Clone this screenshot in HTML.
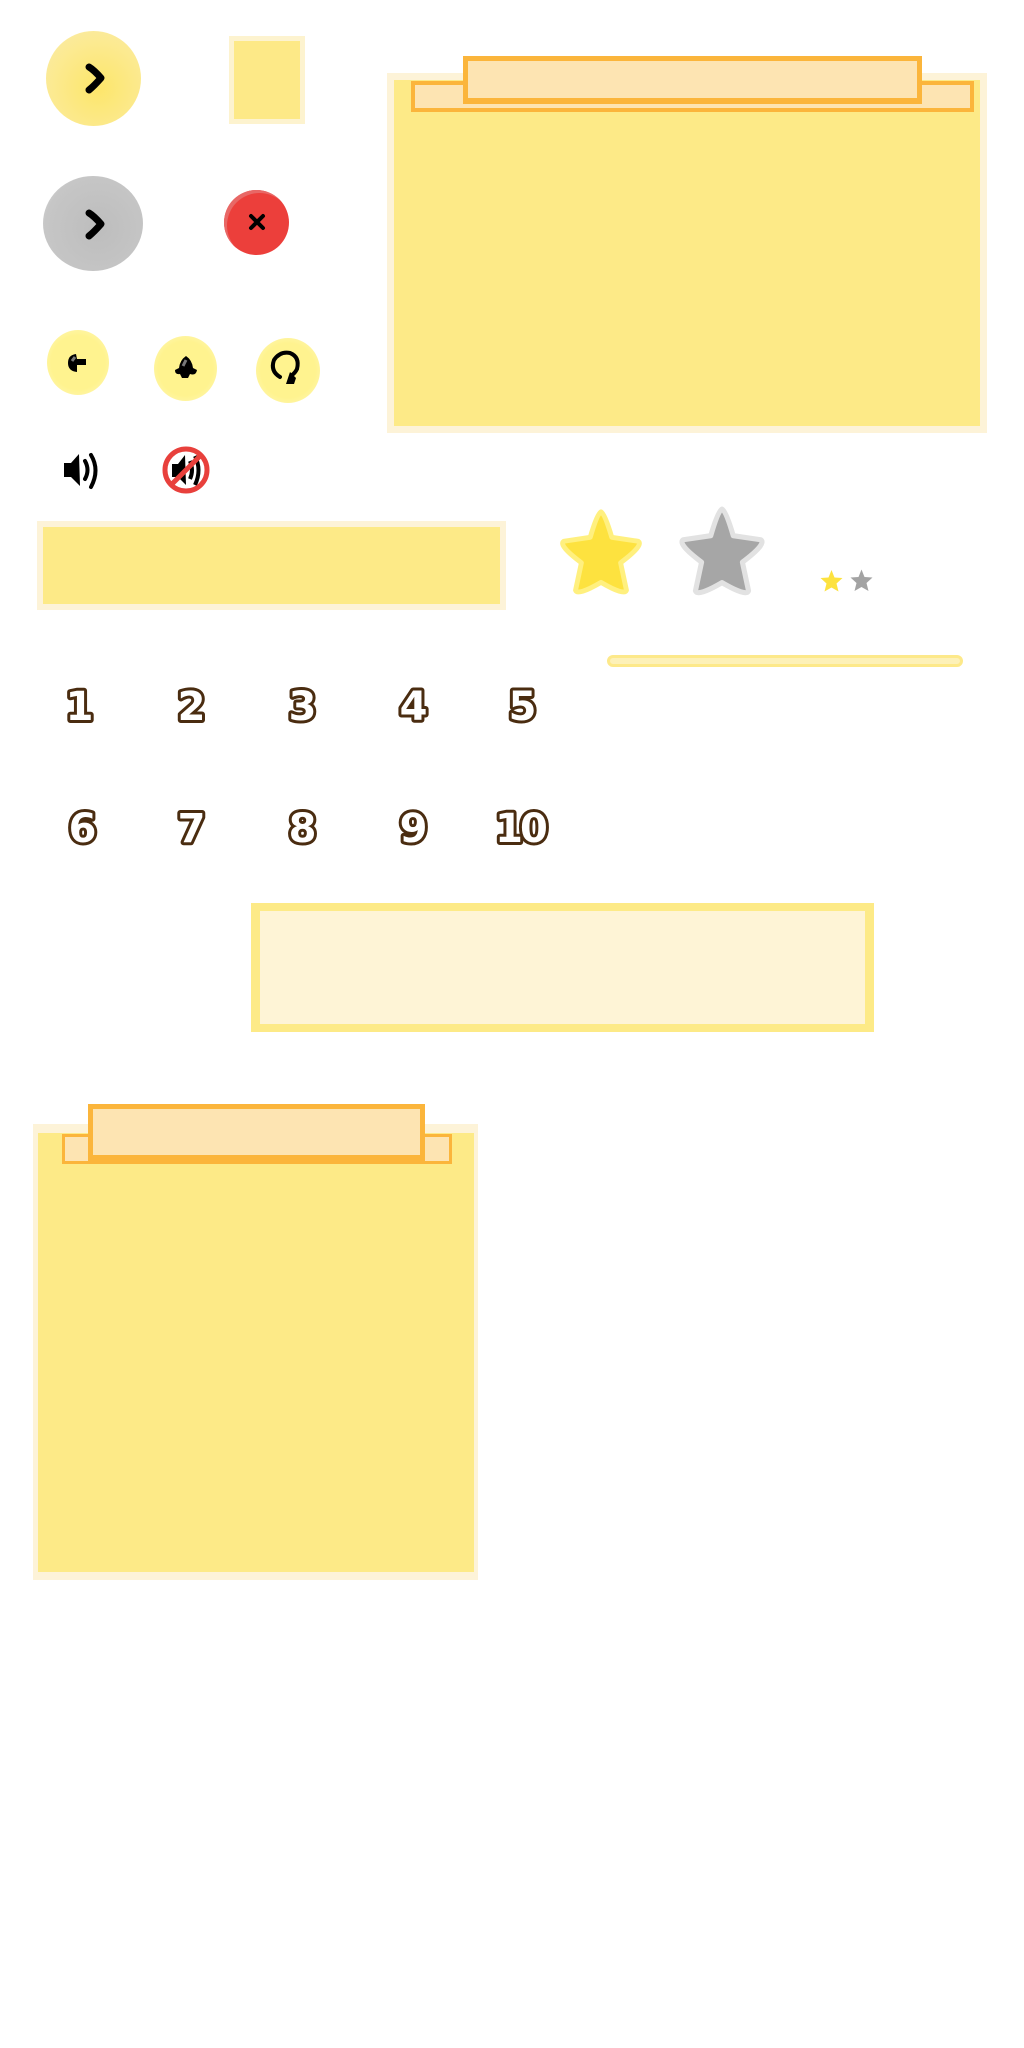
<!DOCTYPE html>
<html><head><meta charset="utf-8"><style>
html,body{margin:0;padding:0;background:#fff;}
body{width:1024px;height:2048px;position:relative;overflow:hidden;font-family:"Liberation Sans",sans-serif;}
.a{position:absolute;box-sizing:border-box;}
</style></head><body>
<div class="a" style="left:46px;top:31px;width:95px;height:95px;border-radius:50%;background:radial-gradient(circle at 55% 60%,#fde66a,#fbeb9e 80%,#fdf3c2);"></div>
<svg class="a" style="left:80px;top:62px" width="30" height="34" viewBox="0 0 30 34"><path d="M9 5 Q14 8 21 16 Q14 24 9 28" fill="none" stroke="#000" stroke-width="7" stroke-linecap="round" stroke-linejoin="round"/></svg>
<div class="a" style="left:229px;top:36px;width:76px;height:88px;background:#fde987;border:5px solid #fdf3cf;"></div>
<div class="a" style="left:43px;top:176px;width:100px;height:95px;border-radius:50%;background:radial-gradient(circle at 55% 55%,#bdbdbd,#c6c6c6 70%,#e3e3e3);"></div>
<svg class="a" style="left:80px;top:208px" width="30" height="34" viewBox="0 0 30 34"><path d="M9 5 Q14 8 21 16 Q14 24 9 28" fill="none" stroke="#000" stroke-width="7" stroke-linecap="round" stroke-linejoin="round"/></svg>
<div class="a" style="left:224px;top:190px;width:65px;height:65px;border-radius:50%;background:#ec3f3b;box-shadow:inset 3px 3px 0 #e86866;"></div>
<svg class="a" style="left:246px;top:211px" width="22" height="22" viewBox="0 0 22 22"><path d="M5 5 L17 17 M17 5 L5 17" stroke="#000" stroke-width="4" stroke-linecap="round"/></svg>
<div class="a" style="left:47px;top:330px;width:62px;height:65px;border-radius:50%;background:radial-gradient(circle,#fff38f 60%,#fff8c4);"></div>
<svg class="a" style="left:60px;top:345px" width="36" height="36" viewBox="0 0 36 36"><path d="M8 18 Q8 10 16 9 L17 14 L26 14 L26 20 L17 20 L17 27 Q8 26 8 18Z" fill="#000"/><path d="M12 16 L15 12" stroke="#777" stroke-width="3"/></svg>
<div class="a" style="left:154px;top:336px;width:63px;height:65px;border-radius:50%;background:radial-gradient(circle,#fff38f 60%,#fff8c4);"></div>
<svg class="a" style="left:168px;top:350px" width="36" height="36" viewBox="0 0 36 36"><path d="M18 6 Q24 10 25 18 L29 20 Q28 26 22 24 L20 28 L14 28 L12 24 Q7 25 7 20 L11 18 Q12 10 18 6Z" fill="#000"/><path d="M15 16 L18 10" stroke="#777" stroke-width="3"/></svg>
<div class="a" style="left:256px;top:338px;width:64px;height:65px;border-radius:50%;background:radial-gradient(circle,#fff38f 60%,#fff8c4);"></div>
<svg class="a" style="left:264px;top:345px" width="50" height="50" viewBox="0 0 50 50"><path d="M16 32 Q6 26 10 15 Q16 6 26 8 Q36 12 33 24 Q31 28 28 30" fill="none" stroke="#000" stroke-width="4" stroke-linecap="round"/><path d="M26 27 L32 33 L30 39 L22 39 Z" fill="#000"/></svg>
<svg class="a" style="left:60px;top:448px" width="44" height="44" viewBox="0 0 44 44"><path d="M4 15 L11 15 L19 6 L20 38 L11 29 L4 29 Z" fill="#000"/><path d="M25 13 Q30 22 25 31" fill="none" stroke="#000" stroke-width="4" stroke-linecap="round"/><path d="M31 7 Q40 22 31 39" fill="none" stroke="#000" stroke-width="4" stroke-linecap="round"/></svg>
<svg class="a" style="left:160px;top:444px" width="52" height="52" viewBox="0 0 52 52"><path d="M12 20 L18 20 L25 11 L26 41 L18 33 L12 33 Z" fill="#000"/><path d="M30 17 Q34 26 30 35" fill="none" stroke="#000" stroke-width="4"/><path d="M35 12 Q42 26 35 41" fill="none" stroke="#000" stroke-width="4"/><circle cx="26" cy="26" r="21" fill="none" stroke="#e8403c" stroke-width="5"/><path d="M11 41 L41 11" stroke="#e8403c" stroke-width="5"/></svg>
<div class="a" style="left:387px;top:73px;width:600px;height:360px;background:#fdea87;border:7px solid #fdf3d8;"></div>
<div class="a" style="left:411px;top:81px;width:563px;height:31px;background:#fde4b2;border:4px solid #fbb53b;"></div>
<div class="a" style="left:463px;top:56px;width:459px;height:48px;background:#fde4b2;border:5px solid #fbb53b;border-bottom-width:6px;"></div>
<div class="a" style="left:37px;top:521px;width:469px;height:89px;background:#fdea87;border:6px solid #fdf3d8;"></div>
<svg class="a" style="left:552px;top:506px" width="98" height="94" viewBox="0 0 100 96"><path d="M50 6 Q54 8 61 32 L88 36 Q94 40 70 58 L76 86 Q74 92 50 78 Q26 92 24 86 L30 58 Q6 40 12 36 L39 32 Q46 8 50 6Z" fill="#fde23f" stroke="#fff07f" stroke-width="5" stroke-linejoin="round"/></svg>
<svg class="a" style="left:670px;top:503px" width="104" height="98" viewBox="0 0 100 96"><path d="M50 6 Q54 8 61 32 L88 36 Q94 40 70 58 L76 86 Q74 92 50 78 Q26 92 24 86 L30 58 Q6 40 12 36 L39 32 Q46 8 50 6Z" fill="#a6a6a6" stroke="#e2e2e2" stroke-width="5" stroke-linejoin="round"/></svg>
<svg class="a" style="left:819px;top:569px" width="25" height="24" viewBox="0 0 100 96"><path d="M50 4 L62 34 L94 36 L70 58 L78 90 L50 74 L22 90 L30 58 L6 36 L38 34Z" fill="#fde23f"/></svg>
<svg class="a" style="left:849px;top:568px" width="25" height="25" viewBox="0 0 100 96"><path d="M50 4 L62 34 L94 36 L70 58 L78 90 L50 74 L22 90 L30 58 L6 36 L38 34Z" fill="#a3a3a3"/></svg>
<div class="a" style="left:607px;top:655px;width:356px;height:12px;border-radius:6px;background:#fdf1b8;border:3px solid #fde98a;"></div>
<svg class="a" style="left:0;top:660px" width="600" height="220" viewBox="0 0 600 220">
<g font-family="DejaVu Sans, Liberation Sans, sans-serif" font-weight="bold" font-size="40" fill="#fff" stroke="#4a2c10" stroke-width="6" stroke-linejoin="round" paint-order="stroke" text-anchor="middle" letter-spacing="-3">
<text x="78" y="60">1</text><text x="190" y="60">2</text><text x="301" y="60">3</text><text x="412" y="60">4</text><text x="521" y="60">5</text>
<text x="81" y="182">6</text><text x="190" y="182">7</text><text x="301" y="182">8</text><text x="412" y="182">9</text><text x="520" y="182">10</text>
</g></svg>
<div class="a" style="left:251px;top:903px;width:623px;height:129px;background:#fef4d6;border:9px solid #fdea87;border-width:8px 9px;"></div>
<div class="a" style="left:33px;top:1124px;width:445px;height:456px;background:#fdea87;border:6px solid #fdf3d8;border-width:9px 4px 8px 5px;"></div>
<div class="a" style="left:62px;top:1134px;width:390px;height:30px;background:#fde4b2;border:3px solid #fbb53b;"></div>
<div class="a" style="left:88px;top:1104px;width:337px;height:59px;background:#fde4b2;border:5px solid #fbb53b;border-bottom-width:8px;"></div>
</body></html>
